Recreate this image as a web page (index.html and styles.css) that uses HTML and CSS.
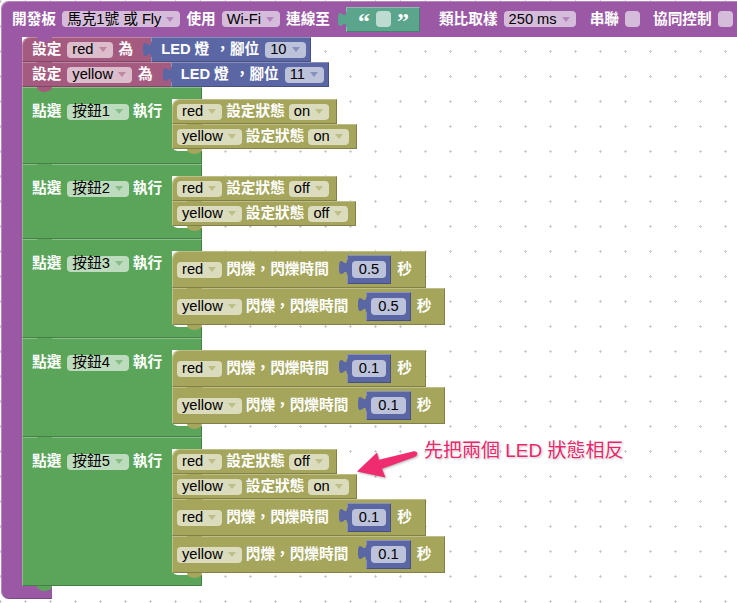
FILE: index.html
```html
<!DOCTYPE html>
<html lang="zh-Hant-TW">
<head>
<meta charset="utf-8">
<title>Blockly</title>
<link rel="stylesheet" href="styles.css">
</head>
<body>
<div class="ws">
  <svg class="grid" width="737" height="603">
    <defs>
      <pattern id="g" width="25" height="25" x="-1" y="0" patternUnits="userSpaceOnUse">
        <rect x="0" y="1" width="3" height="1" fill="#ccc"/>
        <rect x="1" y="0" width="1" height="3" fill="#ccc"/>
      </pattern>
    </defs>
    <rect width="737" height="603" fill="url(#g)"/>
  </svg>

  <div class="board">
    <div class="board-head blk">
      <span class="lbl">開發板</span>
      <span class="fld">馬克1號 或 Fly<i class="arr"></i></span>
      <span class="lbl">使用</span>
      <span class="fld">Wi-Fi<i class="arr"></i></span>
      <span class="lbl">連線至</span>
      <span class="txt blk">
        <svg class="tab" viewBox="0 0 9 15"><path d="M9,0 H8 C8,10 0,-8 0,7.5 C0,23 8,5 8,15 H9 Z"/></svg>
        <span class="q">“</span><span class="tfld"></span><span class="q">”</span>
      </span>
      <span class="lbl gap-l">類比取樣</span>
      <span class="fld">250 ms<i class="arr"></i></span>
      <span class="lbl gap-m">串聯</span>
      <span class="chk"></span>
      <span class="lbl gap-s">協同控制</span>
      <span class="chk"></span>
    </div>

    <div class="board-mid">
      <div class="board-arm"></div>
      <div class="board-hole">
        <div class="red stmt blk first">
          <span class="lbl">設定</span>
          <span class="fld">red<i class="arr"></i></span>
          <span class="lbl">為</span>
          <span class="led blk">
            <svg class="tab" viewBox="0 0 9 15"><path d="M9,0 H8 C8,10 0,-8 0,7.5 C0,23 8,5 8,15 H9 Z"/></svg>
            <span class="lbl">LED 燈</span>
            <span class="lbl">，腳位</span>
            <span class="fld">10<i class="arr"></i></span>
          </span>
        </div>
        <div class="red stmt blk">
          <span class="lbl">設定</span>
          <span class="fld">yellow<i class="arr"></i></span>
          <span class="lbl">為</span>
          <span class="led blk">
            <svg class="tab" viewBox="0 0 9 15"><path d="M9,0 H8 C8,10 0,-8 0,7.5 C0,23 8,5 8,15 H9 Z"/></svg>
            <span class="lbl">LED 燈</span>
            <span class="lbl">，腳位</span>
            <span class="fld">11<i class="arr"></i></span>
          </span>
        </div>

        <div class="grn stmt blk g1">
          <div class="gl">
            <span class="lbl">點選</span>
            <span class="fld">按鈕1<i class="arr"></i></span>
            <span class="lbl">執行</span>
          </div>
          <div class="hole">
            <div class="olv stmt blk first">
              <span class="fld">red<i class="arr"></i></span>
              <span class="lbl">設定狀態</span>
              <span class="fld">on<i class="arr"></i></span>
            </div>
            <div class="olv stmt blk">
              <span class="fld">yellow<i class="arr"></i></span>
              <span class="lbl">設定狀態</span>
              <span class="fld">on<i class="arr"></i></span>
            </div>
          </div>
        </div>

        <div class="grn stmt blk">
          <div class="gl">
            <span class="lbl">點選</span>
            <span class="fld">按鈕2<i class="arr"></i></span>
            <span class="lbl">執行</span>
          </div>
          <div class="hole">
            <div class="olv stmt blk first">
              <span class="fld">red<i class="arr"></i></span>
              <span class="lbl">設定狀態</span>
              <span class="fld">off<i class="arr"></i></span>
            </div>
            <div class="olv stmt blk">
              <span class="fld">yellow<i class="arr"></i></span>
              <span class="lbl">設定狀態</span>
              <span class="fld">off<i class="arr"></i></span>
            </div>
          </div>
        </div>

        <div class="grn stmt blk">
          <div class="gl">
            <span class="lbl">點選</span>
            <span class="fld">按鈕3<i class="arr"></i></span>
            <span class="lbl">執行</span>
          </div>
          <div class="hole">
            <div class="olv stmt blk first tall">
              <span class="fld">red<i class="arr"></i></span>
              <span class="lbl">閃爍，閃爍時間</span>
              <span class="num blk">
                <svg class="tab" viewBox="0 0 9 15"><path d="M9,0 H8 C8,10 0,-8 0,7.5 C0,23 8,5 8,15 H9 Z"/></svg>
                <span class="nfld">0.5</span>
              </span>
              <span class="lbl sec">秒</span>
            </div>
            <div class="olv stmt blk tall">
              <span class="fld">yellow<i class="arr"></i></span>
              <span class="lbl">閃爍，閃爍時間</span>
              <span class="num blk">
                <svg class="tab" viewBox="0 0 9 15"><path d="M9,0 H8 C8,10 0,-8 0,7.5 C0,23 8,5 8,15 H9 Z"/></svg>
                <span class="nfld">0.5</span>
              </span>
              <span class="lbl sec">秒</span>
            </div>
          </div>
        </div>

        <div class="grn stmt blk">
          <div class="gl">
            <span class="lbl">點選</span>
            <span class="fld">按鈕4<i class="arr"></i></span>
            <span class="lbl">執行</span>
          </div>
          <div class="hole">
            <div class="olv stmt blk first tall">
              <span class="fld">red<i class="arr"></i></span>
              <span class="lbl">閃爍，閃爍時間</span>
              <span class="num blk">
                <svg class="tab" viewBox="0 0 9 15"><path d="M9,0 H8 C8,10 0,-8 0,7.5 C0,23 8,5 8,15 H9 Z"/></svg>
                <span class="nfld">0.1</span>
              </span>
              <span class="lbl sec">秒</span>
            </div>
            <div class="olv stmt blk tall">
              <span class="fld">yellow<i class="arr"></i></span>
              <span class="lbl">閃爍，閃爍時間</span>
              <span class="num blk">
                <svg class="tab" viewBox="0 0 9 15"><path d="M9,0 H8 C8,10 0,-8 0,7.5 C0,23 8,5 8,15 H9 Z"/></svg>
                <span class="nfld">0.1</span>
              </span>
              <span class="lbl sec">秒</span>
            </div>
          </div>
        </div>

        <div class="grn stmt blk">
          <div class="gl">
            <span class="lbl">點選</span>
            <span class="fld">按鈕5<i class="arr"></i></span>
            <span class="lbl">執行</span>
          </div>
          <div class="hole">
            <div class="olv stmt blk first">
              <span class="fld">red<i class="arr"></i></span>
              <span class="lbl">設定狀態</span>
              <span class="fld">off<i class="arr"></i></span>
            </div>
            <div class="olv stmt blk">
              <span class="fld">yellow<i class="arr"></i></span>
              <span class="lbl">設定狀態</span>
              <span class="fld">on<i class="arr"></i></span>
            </div>
            <div class="olv stmt blk tall">
              <span class="fld">red<i class="arr"></i></span>
              <span class="lbl">閃爍，閃爍時間</span>
              <span class="num blk">
                <svg class="tab" viewBox="0 0 9 15"><path d="M9,0 H8 C8,10 0,-8 0,7.5 C0,23 8,5 8,15 H9 Z"/></svg>
                <span class="nfld">0.1</span>
              </span>
              <span class="lbl sec">秒</span>
            </div>
            <div class="olv stmt blk tall">
              <span class="fld">yellow<i class="arr"></i></span>
              <span class="lbl">閃爍，閃爍時間</span>
              <span class="num blk">
                <svg class="tab" viewBox="0 0 9 15"><path d="M9,0 H8 C8,10 0,-8 0,7.5 C0,23 8,5 8,15 H9 Z"/></svg>
                <span class="nfld">0.1</span>
              </span>
              <span class="lbl sec">秒</span>
            </div>
          </div>
        </div>
      </div>
    </div>
    <div class="board-foot"></div>
  </div>

  <svg class="pointer" width="80" height="45" viewBox="0 0 80 45">
    <path d="M7,28.5 L27,9.5 L29,16.8 L64,8.2 Q67.5,8.2 67.2,11 Q67,13 64.5,14 L32,25.8 L35.5,34.5 Z"/>
  </svg>
  <div class="note">先把兩個 LED 狀態相反</div>
</div>
</body>
</html>
```

FILE: styles.css
```css
* { box-sizing: border-box; margin: 0; padding: 0; }
html, body { width: 737px; height: 603px; overflow: hidden; background: #fff; }

.ws {
  position: relative;
  z-index: 0;
  width: 737px;
  height: 603px;
  overflow: hidden;
  padding: 1px 0 0 1px;
  font-family: "Liberation Sans", "Noto Sans CJK TC", sans-serif;
  font-size: 14.667px;
  line-height: 1;
  color: #fff;
}
.grid { position: absolute; left: 0; top: 0; z-index: -1; }

/* generic block look */
.blk {
  background: var(--c);
  box-shadow: inset 1px 1px 0 rgba(255,255,255,.28), inset -1px -1px 0 rgba(0,0,0,.22);
}
.lbl { font-weight: bold; white-space: nowrap; }
.fld {
  display: inline-flex;
  align-items: center;
  height: 16px;
  padding: 0 6px 0 5px;
  gap: 5px;
  border-radius: 4px;
  background: rgba(255,255,255,.6);
  color: #000;
  white-space: nowrap;
  flex: none;
}
.arr {
  width: 0; height: 0;
  border-left: 4px solid transparent;
  border-right: 4px solid transparent;
  border-top: 5px solid var(--c);
  opacity: .55;
}
.tab {
  position: absolute;
  left: -8px;
  top: 5px;
  width: 9px;
  height: 15px;
  overflow: visible;
  fill: var(--c);
}
.stmt { position: relative; }
.stmt::after {
  content: "";
  position: absolute;
  left: 15px;
  bottom: -5px;
  width: 15px;
  height: 5px;
  background: var(--c);
  border-radius: 0 0 7px 7px / 0 0 5px 5px;
  z-index: 1;
}

/* board (purple) */
.board { display: flex; flex-direction: column; width: max-content; --c: #9a58a5; }
.board-head {
  position: relative;
  display: flex;
  align-items: center;
  height: 36px;
  padding: 0 30px 0 11px;
  gap: 6px;
  border-radius: 8px 0 0 0;
  box-shadow: inset 1px 1px 0 rgba(255,255,255,.28);
}
.board-head::after {
  content: "";
  position: absolute;
  left: 36px;
  bottom: -5px;
  width: 15px;
  height: 5px;
  background: var(--c);
  border-radius: 0 0 7px 7px / 0 0 5px 5px;
  z-index: 1;
}
.gap-l { margin-left: 13px; }
.gap-m { margin-left: 8px; }
.gap-s { margin-left: 7px; }
.chk {
  width: 15px; height: 16px;
  border-radius: 4px;
  background: rgba(255,255,255,.6);
  flex: none;
}
.txt {
  --c: #5ba58c;
  position: relative;
  display: flex;
  align-items: center;
  height: 25px;
  margin-left: 10px;
  padding: 0 11px 0 12px;
  gap: 6px;
}
.q {
  font: bold 24px/1 "Liberation Serif", serif;
  height: 25px;
  padding-top: 2px;
}
.tfld {
  width: 15px; height: 16px;
  border-radius: 4px;
  background: rgba(255,255,255,.6);
}
.board-mid { display: flex; }
.board-arm { width: 21px; flex: none; background: var(--c); box-shadow: inset 1px 0 0 rgba(255,255,255,.28); }
.board-hole { display: flex; flex-direction: column; }
.board-foot {
  width: 51px; height: 13px;
  background: var(--c);
  border-radius: 0 0 0 8px;
  box-shadow: inset 1px 0 0 rgba(255,255,255,.28), inset 0 -1px 0 rgba(0,0,0,.2);
}

/* red "set" blocks */
.red {
  --c: #a55b80;
  display: flex;
  align-items: center;
  height: 25px;
  width: max-content;
  padding-left: 10px;
  gap: 6px;
}
.red.first { border-top-left-radius: 8px; }
.led {
  --c: #5b67a5;
  position: relative;
  display: flex;
  align-items: center;
  height: 25px;
  margin-left: 12px;
  padding: 0 5px 0 10px;
  gap: 6px;
}

/* green event blocks */
.grn {
  --c: #5ba55b;
  display: flex;
  align-items: flex-start;
  width: 180px;
  padding: 12px 0 11px;
}
.grn.g1 { padding-bottom: 13px; }
.gl {
  width: 150px;
  flex: none;
  height: 25px;
  display: flex;
  align-items: center;
  padding-left: 10px;
  gap: 6px;
}
.gl .lbl:last-child { margin-left: -2px; }
.hole {
  width: 30px;
  flex: none;
  display: flex;
  flex-direction: column;
  padding-bottom: 2px;
  background: #fff;
  border-bottom-left-radius: 6px;
}

/* olive statements */
.olv {
  --c: #a5a55b;
  display: flex;
  align-items: center;
  height: 25px;
  width: max-content;
  padding: 0 8px 0 5px;
  gap: 4px;
}
.olv.first { border-top-left-radius: 8px; }
.olv.tall { height: 37px; padding-right: 14px; }
.num {
  --c: #5b67a5;
  position: relative;
  display: flex;
  align-items: center;
  height: 29px;
  margin-left: 14px;
  padding: 0 5px;
}
.nfld {
  display: flex;
  align-items: center;
  height: 17px;
  padding: 0 7px;
  border-radius: 4px;
  background: rgba(255,255,255,.6);
  color: #000;
}
.sec { margin-left: 2px; }

/* annotation */
.pointer {
  position: absolute;
  left: 350px;
  top: 443px;
  z-index: 3;
  fill: #ee2c6f;
  filter: drop-shadow(1px 1px 1px rgba(0,0,0,.3));
}
.note {
  position: absolute;
  left: 424px;
  top: 441px;
  z-index: 3;
  font-family: "Liberation Sans", "Noto Sans CJK TC", sans-serif;
  font-size: 19px;
  line-height: 19px;
  color: #e8266b;
  white-space: nowrap;
  text-shadow: 0 0 2px #fff, 0 0 2px #fff, 1px 1px 2px rgba(0,0,0,.3);
}
```
